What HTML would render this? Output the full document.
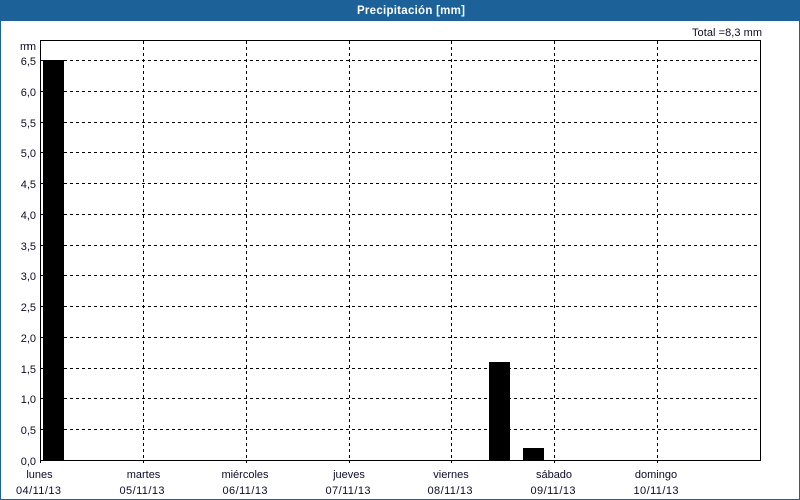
<!DOCTYPE html>
<html><head><meta charset="utf-8"><style>
html,body{margin:0;padding:0;background:#fff;width:800px;height:500px;overflow:hidden}
svg{display:block}
text{font-family:"Liberation Sans",sans-serif;font-size:11px;fill:#0c0c28}
</style></head><body>
<svg width="800" height="500" viewBox="0 0 800 500" xmlns="http://www.w3.org/2000/svg">
<rect width="800" height="500" fill="#1c6198"/>
<rect x="1" y="21" width="798" height="478" fill="#fff"/>
<text x="411" y="14" text-anchor="middle" style="fill:#fff;font-weight:bold;font-size:11.5px" textLength="108">Precipitación [mm]</text>
<g shape-rendering="crispEdges">
<g stroke="#000" stroke-width="1" stroke-dasharray="3 3" fill="none">
<path d="M40 60.5H760M40 91.5H760M40 122.5H760M40 152.5H760M40 183.5H760M40 214.5H760M40 245.5H760M40 275.5H760M40 306.5H760M40 337.5H760M40 368.5H760M40 398.5H760M40 429.5H760"/>
<path d="M143.5 41V463M246.5 41V463M349.5 41V463M451.5 41V463M554.5 41V463M657.5 41V463"/>
</g>
<rect x="40" y="40" width="721" height="1" fill="#000"/>
<rect x="40" y="40" width="1" height="423" fill="#000"/>
<rect x="760" y="40" width="1" height="421" fill="#000"/>
<rect x="40" y="460" width="721" height="1" fill="#000"/>
<rect x="43" y="60" width="21" height="401" fill="#000"/>
<rect x="489" y="362" width="21" height="99" fill="#000"/>
<rect x="523" y="448" width="21" height="13" fill="#000"/>
</g>
<text x="692" y="36" textLength="70">Total =8,3 mm</text>
<text x="20" y="50" textLength="16">mm</text>
<g text-anchor="end">
<text x="36" y="65">6,5</text>
<text x="36" y="96">6,0</text>
<text x="36" y="127">5,5</text>
<text x="36" y="157">5,0</text>
<text x="36" y="188">4,5</text>
<text x="36" y="219">4,0</text>
<text x="36" y="250">3,5</text>
<text x="36" y="280">3,0</text>
<text x="36" y="311">2,5</text>
<text x="36" y="342">2,0</text>
<text x="36" y="373">1,5</text>
<text x="36" y="403">1,0</text>
<text x="36" y="434">0,5</text>
<text x="36" y="465">0,0</text>
</g>
<g text-anchor="middle">
<text x="39.5" y="478">lunes</text>
<text x="143.5" y="478">martes</text>
<text x="245" y="478">miércoles</text>
<text x="349" y="478">jueves</text>
<text x="451" y="478">viernes</text>
<text x="554" y="478">sábado</text>
<text x="656" y="478">domingo</text>
<text x="38.5" y="494" textLength="45">04/11/13</text>
<text x="142" y="494" textLength="45">05/11/13</text>
<text x="245" y="494" textLength="45">06/11/13</text>
<text x="348" y="494" textLength="45">07/11/13</text>
<text x="450" y="494" textLength="45">08/11/13</text>
<text x="553" y="494" textLength="45">09/11/13</text>
<text x="656" y="494" textLength="45">10/11/13</text>
</g>
</svg>
</body></html>
